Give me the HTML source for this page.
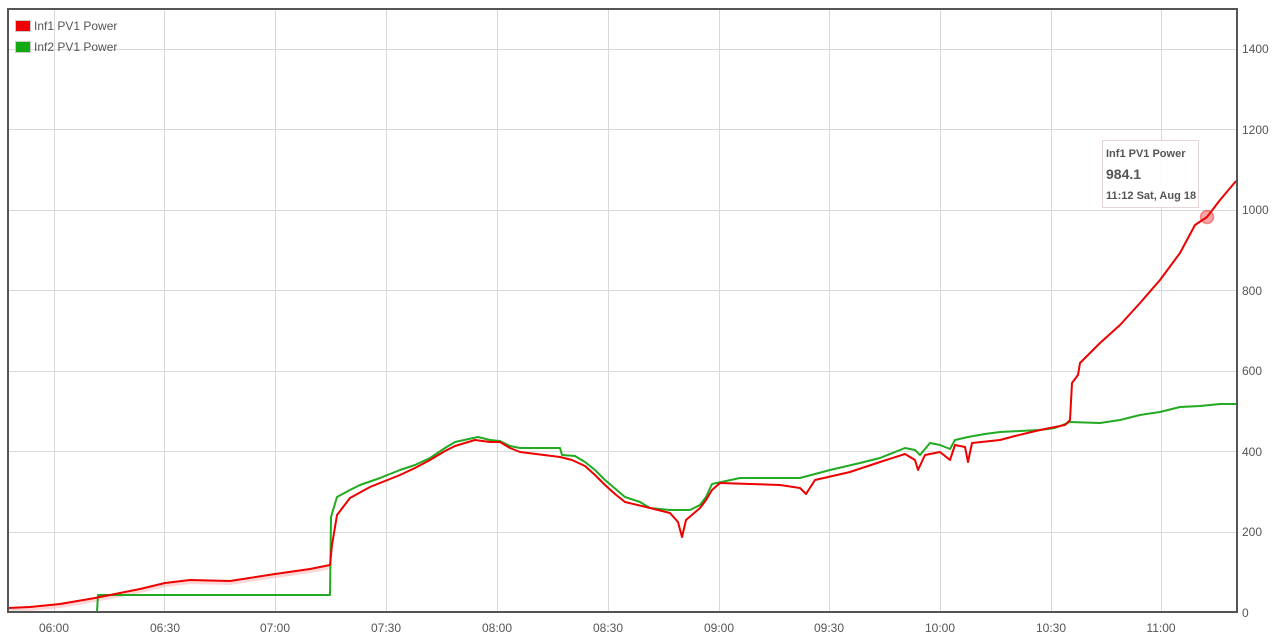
<!DOCTYPE html>
<html><head><meta charset="utf-8"><style>
html,body{margin:0;padding:0;background:#fff;width:1276px;height:636px;overflow:hidden}
svg{display:block;font-family:"Liberation Sans",Arial,sans-serif}
</style></head><body>
<svg width="1276" height="636" viewBox="0 0 1276 636">
<g stroke="#d8d8d8" stroke-width="1">
<line x1="54.5" y1="10" x2="54.5" y2="612"/><line x1="164.5" y1="10" x2="164.5" y2="612"/><line x1="275.5" y1="10" x2="275.5" y2="612"/><line x1="386.5" y1="10" x2="386.5" y2="612"/><line x1="497.5" y1="10" x2="497.5" y2="612"/><line x1="608.5" y1="10" x2="608.5" y2="612"/><line x1="719.5" y1="10" x2="719.5" y2="612"/><line x1="829.5" y1="10" x2="829.5" y2="612"/><line x1="940.5" y1="10" x2="940.5" y2="612"/><line x1="1051.5" y1="10" x2="1051.5" y2="612"/><line x1="1161.5" y1="10" x2="1161.5" y2="612"/>
<line x1="8" y1="49.5" x2="1236" y2="49.5"/><line x1="8" y1="129.5" x2="1236" y2="129.5"/><line x1="8" y1="210.5" x2="1236" y2="210.5"/><line x1="8" y1="290.5" x2="1236" y2="290.5"/><line x1="8" y1="371.5" x2="1236" y2="371.5"/><line x1="8" y1="451.5" x2="1236" y2="451.5"/><line x1="8" y1="532.5" x2="1236" y2="532.5"/>
</g>
<polyline fill="none" stroke="#f7b0b0" stroke-width="4" opacity="0.5" points="8,610 30,609 60,606 95,600 110,597 140,591 165,585 190,582 230,583 275,576 310,571 330,567"/>
<polyline fill="none" stroke="#22aa22" stroke-width="2" stroke-linejoin="round" points="8,612 97,612 98,595 330,595 331,517 337,497 350,490 360,485 380,478 400,470 415,465 430,458 445,448 455,442 478,437 490,440 500,441 510,446 520,448 560,448 562,455 575,456 585,462 595,470 605,480 625,497 640,502 650,508 670,510 690,510 700,505 706,497 712,484 740,478 800,478 830,470 860,463 880,458 905,448 915,450 920,455 930,443 940,445 950,449 955,440 968,437 985,434 1000,432 1020,431 1040,430 1055,428 1070,422 1100,423 1120,420 1140,415 1160,412 1180,407 1200,406 1220,404 1236,404"/>
<polyline fill="none" stroke="#ee0000" stroke-width="2" stroke-linejoin="round" points="8,608 30,607 60,604 95,598 110,595 140,589 165,583 190,580 230,581 275,574 310,569 330,565 332,545 337,515 350,498 370,487 385,481 400,475 415,468 430,460 445,451 455,446 475,440 490,442 500,442 510,448 520,452 560,457 572,460 585,466 595,475 605,485 615,494 625,502 650,508 670,513 678,522 682,537 686,520 700,508 706,500 712,490 720,483 750,484 780,485 800,488 806,494 815,480 850,472 880,462 905,454 915,460 918,470 925,455 940,452 950,460 955,445 965,447 968,462 972,443 1000,440 1015,436 1040,430 1065,425 1070,420 1072,383 1078,375 1080,363 1100,343 1120,325 1140,303 1160,280 1180,253 1195,225 1207,217 1220,200 1236,181"/>
<circle cx="1207" cy="217" r="6.5" fill="rgba(238,0,0,0.35)" stroke="rgba(238,0,0,0.4)" stroke-width="1.5"/>
<rect x="8" y="9" width="1229" height="603" fill="none" stroke="#555" stroke-width="2"/>
<rect x="1102.5" y="140.5" width="96" height="67" fill="rgba(255,255,255,0.85)" stroke="#e6d6d6"/>
<text x="1106" y="157" font-size="11" font-weight="bold" fill="#555">Inf1 PV1 Power</text>
<text x="1106" y="179" font-size="14" font-weight="bold" fill="#555">984.1</text>
<text x="1106" y="199" font-size="11" font-weight="bold" fill="#555">11:12 Sat, Aug 18</text>
<rect x="15.5" y="20.5" width="15" height="11" fill="#ee0000" stroke="#ccc"/>
<text x="34" y="30" font-size="12" fill="#555">Inf1 PV1 Power</text>
<rect x="15.5" y="41.5" width="15" height="11" fill="#11aa11" stroke="#ccc"/>
<text x="34" y="51" font-size="12" fill="#555">Inf2 PV1 Power</text>
<g font-size="12" fill="#555" text-anchor="middle">
<text x="54" y="632">06:00</text><text x="165" y="632">06:30</text><text x="275" y="632">07:00</text><text x="386" y="632">07:30</text><text x="497" y="632">08:00</text><text x="608" y="632">08:30</text><text x="719" y="632">09:00</text><text x="829" y="632">09:30</text><text x="940" y="632">10:00</text><text x="1051" y="632">10:30</text><text x="1161" y="632">11:00</text>
</g>
<g font-size="12" fill="#555">
<text x="1242" y="617">0</text><text x="1242" y="536">200</text><text x="1242" y="456">400</text><text x="1242" y="375">600</text><text x="1242" y="295">800</text><text x="1242" y="214">1000</text><text x="1242" y="134">1200</text><text x="1242" y="53">1400</text>
</g>
</svg>
</body></html>
